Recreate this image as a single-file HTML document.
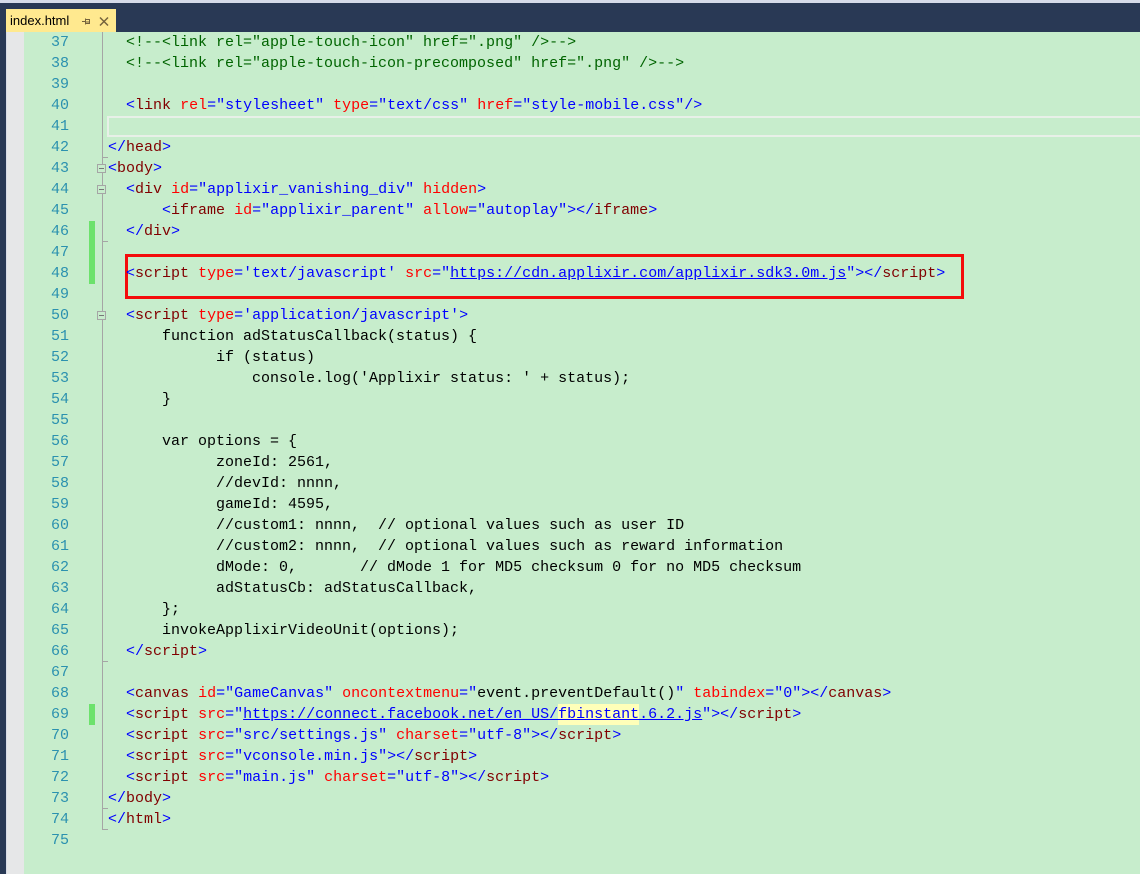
<!DOCTYPE html>
<html>
<head>
<meta charset="utf-8">
<style>
html,body{margin:0;padding:0;width:1140px;height:874px;overflow:hidden;background:#c7edcc}
#a{position:absolute;left:0;top:0;width:1140px;height:874px;overflow:hidden;background:#c7edcc}
.b{position:absolute}
.l{position:absolute;left:108px;height:21px;line-height:21px;font:15px/21px "Liberation Mono",monospace;white-space:pre;color:#000}
.n{position:absolute;left:33px;width:36px;text-align:right;height:21px;font:15px/21px "Liberation Mono",monospace;color:#2b91af}
i{font-style:normal}
.t{color:#0000ff}.m{color:#800000}.r{color:#ff0000}.c{color:#006400}.u{color:#0000ff;text-decoration:underline}
.f{position:absolute;left:97px;width:7px;height:7px;border:1px solid #a5a5a5;background:#c7edcc}
.f:after{content:"";position:absolute;left:1px;top:3px;width:5px;height:1px;background:#777}
.k{position:absolute;left:102px;width:6px;height:1px;background:#a5a5a5}
</style>
</head>
<body>
<div id="a">
<div class="b" style="left:0;top:0;width:1140px;height:3px;background:#d6dbe9"></div>
<div class="b" style="left:0;top:3px;width:1140px;height:29px;background:#293955"></div>
<div class="b" style="left:0;top:3px;width:6px;height:871px;background:#293955"></div>
<div class="b" style="left:7px;top:32px;width:17px;height:842px;background:#e6e7e8"></div>
<div class="b" style="left:6px;top:32px;width:1px;height:842px;background:#d8dce6"></div>
<div class="b" style="left:6px;top:9px;width:110px;height:23px;background:#ffe98f"></div>
<div class="b" style="left:10px;top:12px;font:13px/18px 'Liberation Sans',sans-serif;color:#000">index.html</div>
<svg class="b" style="left:80px;top:14px" width="32" height="14" viewBox="0 0 32 14"><path d="M2 7.5H5M5.5 4.5V10.5M5.5 5.5H9.5V9.5H5.5M5.5 8H9.5" fill="none" stroke="#75633d" stroke-width="1"/><path d="M20 3.5L28 11.5M28 3.5L20 11.5" fill="none" stroke="#75633d" stroke-width="1.5"/></svg>

<div class="b" style="left:102px;top:32px;width:1px;height:798px;background:#a5a5a5"></div>
<div class="k" style="top:157px"></div>
<div class="k" style="top:241px"></div>
<div class="k" style="top:661px"></div>
<div class="k" style="top:808px"></div>
<div class="k" style="top:829px"></div>
<div class="f" style="top:164px"></div>
<div class="f" style="top:185px"></div>
<div class="f" style="top:311px"></div>
<div class="b" style="left:89px;top:221px;width:6px;height:63px;background:#6ce26c"></div>
<div class="b" style="left:89px;top:704px;width:6px;height:21px;background:#6ce26c"></div>
<div class="b" style="left:107px;top:116px;width:1033px;height:21px;box-sizing:border-box;border:2px solid #e8f0e8;border-right:0"></div>
<div class="b" style="left:558px;top:704px;width:81px;height:21px;background:#ffffb9"></div>
<div class="b" style="left:125px;top:254px;width:839px;height:45px;box-sizing:border-box;border:3px solid #f40c0c"></div>

<div class="n" style="top:32px">37</div>
<div class="n" style="top:53px">38</div>
<div class="n" style="top:74px">39</div>
<div class="n" style="top:95px">40</div>
<div class="n" style="top:116px">41</div>
<div class="n" style="top:137px">42</div>
<div class="n" style="top:158px">43</div>
<div class="n" style="top:179px">44</div>
<div class="n" style="top:200px">45</div>
<div class="n" style="top:221px">46</div>
<div class="n" style="top:242px">47</div>
<div class="n" style="top:263px">48</div>
<div class="n" style="top:284px">49</div>
<div class="n" style="top:305px">50</div>
<div class="n" style="top:326px">51</div>
<div class="n" style="top:347px">52</div>
<div class="n" style="top:368px">53</div>
<div class="n" style="top:389px">54</div>
<div class="n" style="top:410px">55</div>
<div class="n" style="top:431px">56</div>
<div class="n" style="top:452px">57</div>
<div class="n" style="top:473px">58</div>
<div class="n" style="top:494px">59</div>
<div class="n" style="top:515px">60</div>
<div class="n" style="top:536px">61</div>
<div class="n" style="top:557px">62</div>
<div class="n" style="top:578px">63</div>
<div class="n" style="top:599px">64</div>
<div class="n" style="top:620px">65</div>
<div class="n" style="top:641px">66</div>
<div class="n" style="top:662px">67</div>
<div class="n" style="top:683px">68</div>
<div class="n" style="top:704px">69</div>
<div class="n" style="top:725px">70</div>
<div class="n" style="top:746px">71</div>
<div class="n" style="top:767px">72</div>
<div class="n" style="top:788px">73</div>
<div class="n" style="top:809px">74</div>
<div class="n" style="top:830px">75</div>

<div class="l c" style="top:32px">  &lt;!--&lt;link rel="apple-touch-icon" href=".png" /&gt;--&gt;</div>
<div class="l c" style="top:53px">  &lt;!--&lt;link rel="apple-touch-icon-precomposed" href=".png" /&gt;--&gt;</div>
<div class="l" style="top:95px">  <i class="t">&lt;</i><i class="m">link</i> <i class="r">rel</i><i class="t">="stylesheet"</i> <i class="r">type</i><i class="t">="text/css"</i> <i class="r">href</i><i class="t">="style-mobile.css"/&gt;</i></div>
<div class="l" style="top:137px"><i class="t">&lt;/</i><i class="m">head</i><i class="t">&gt;</i></div>
<div class="l" style="top:158px"><i class="t">&lt;</i><i class="m">body</i><i class="t">&gt;</i></div>
<div class="l" style="top:179px">  <i class="t">&lt;</i><i class="m">div</i> <i class="r">id</i><i class="t">="applixir_vanishing_div"</i> <i class="r">hidden</i><i class="t">&gt;</i></div>
<div class="l" style="top:200px">      <i class="t">&lt;</i><i class="m">iframe</i> <i class="r">id</i><i class="t">="applixir_parent"</i> <i class="r">allow</i><i class="t">="autoplay"&gt;&lt;/</i><i class="m">iframe</i><i class="t">&gt;</i></div>
<div class="l" style="top:221px">  <i class="t">&lt;/</i><i class="m">div</i><i class="t">&gt;</i></div>
<div class="l" style="top:263px">  <i class="t">&lt;</i><i class="m">script</i> <i class="r">type</i><i class="t">='text/javascript'</i> <i class="r">src</i><i class="t">="</i><i class="u">https://cdn.applixir.com/applixir.sdk3.0m.js</i><i class="t">"&gt;&lt;/</i><i class="m">script</i><i class="t">&gt;</i></div>
<div class="l" style="top:305px">  <i class="t">&lt;</i><i class="m">script</i> <i class="r">type</i><i class="t">='application/javascript'&gt;</i></div>
<div class="l" style="top:326px">      function adStatusCallback(status) {</div>
<div class="l" style="top:347px">            if (status)</div>
<div class="l" style="top:368px">                console.log('Applixir status: ' + status);</div>
<div class="l" style="top:389px">      }</div>
<div class="l" style="top:431px">      var options = {</div>
<div class="l" style="top:452px">            zoneId: 2561,</div>
<div class="l" style="top:473px">            //devId: nnnn,</div>
<div class="l" style="top:494px">            gameId: 4595,</div>
<div class="l" style="top:515px">            //custom1: nnnn,  // optional values such as user ID</div>
<div class="l" style="top:536px">            //custom2: nnnn,  // optional values such as reward information</div>
<div class="l" style="top:557px">            dMode: 0,       // dMode 1 for MD5 checksum 0 for no MD5 checksum</div>
<div class="l" style="top:578px">            adStatusCb: adStatusCallback,</div>
<div class="l" style="top:599px">      };</div>
<div class="l" style="top:620px">      invokeApplixirVideoUnit(options);</div>
<div class="l" style="top:641px">  <i class="t">&lt;/</i><i class="m">script</i><i class="t">&gt;</i></div>
<div class="l" style="top:683px">  <i class="t">&lt;</i><i class="m">canvas</i> <i class="r">id</i><i class="t">="GameCanvas"</i> <i class="r">oncontextmenu</i><i class="t">="</i>event.preventDefault()<i class="t">"</i> <i class="r">tabindex</i><i class="t">="0"&gt;&lt;/</i><i class="m">canvas</i><i class="t">&gt;</i></div>
<div class="l" style="top:704px">  <i class="t">&lt;</i><i class="m">script</i> <i class="r">src</i><i class="t">="</i><i class="u">https://connect.facebook.net/en_US/fbinstant.6.2.js</i><i class="t">"&gt;&lt;/</i><i class="m">script</i><i class="t">&gt;</i></div>
<div class="l" style="top:725px">  <i class="t">&lt;</i><i class="m">script</i> <i class="r">src</i><i class="t">="src/settings.js"</i> <i class="r">charset</i><i class="t">="utf-8"&gt;&lt;/</i><i class="m">script</i><i class="t">&gt;</i></div>
<div class="l" style="top:746px">  <i class="t">&lt;</i><i class="m">script</i> <i class="r">src</i><i class="t">="vconsole.min.js"&gt;&lt;/</i><i class="m">script</i><i class="t">&gt;</i></div>
<div class="l" style="top:767px">  <i class="t">&lt;</i><i class="m">script</i> <i class="r">src</i><i class="t">="main.js"</i> <i class="r">charset</i><i class="t">="utf-8"&gt;&lt;/</i><i class="m">script</i><i class="t">&gt;</i></div>
<div class="l" style="top:788px"><i class="t">&lt;/</i><i class="m">body</i><i class="t">&gt;</i></div>
<div class="l" style="top:809px"><i class="t">&lt;/</i><i class="m">html</i><i class="t">&gt;</i></div>
</div>
</body>
</html>
